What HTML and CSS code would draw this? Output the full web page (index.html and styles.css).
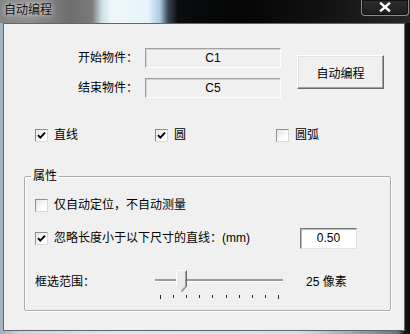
FILE: index.html
```html
<!DOCTYPE html>
<html lang="zh-CN">
<head>
<meta charset="utf-8">
<title>自动编程</title>
<link rel="stylesheet" href="styles.css">
</head>
<body>
<div class="window">
  <div class="titlebar">
    <div class="title">自动编程</div>
    <div class="close">
      <svg width="14" height="10" viewBox="0 0 14 10"><path d="M3 1.5 L11 8.5 M11 1.5 L3 8.5" stroke="#fff" stroke-width="2.4" stroke-linecap="square"/></svg>
    </div>
  </div>
  <div class="client">
    <div class="top">
      <div class="fields">
        <div class="label">开始物件：</div>
        <div class="field">C1</div>
        <div class="label">结束物件：</div>
        <div class="field">C5</div>
      </div>
      <button class="btn">自动编程</button>
    </div>

    <div class="types">
      <div class="check-item"><span class="box checked"><svg width="11" height="11" viewBox="0 0 11 11"><path d="M2 5.2 L4.3 7.6 L9 2.6" fill="none" stroke="#000" stroke-width="1.9"/></svg></span><span>直线</span></div>
      <div class="check-item"><span class="box checked"><svg width="11" height="11" viewBox="0 0 11 11"><path d="M2 5.2 L4.3 7.6 L9 2.6" fill="none" stroke="#000" stroke-width="1.9"/></svg></span><span>圆</span></div>
      <div class="check-item"><span class="box"></span><span>圆弧</span></div>
    </div>

    <fieldset class="group">
      <legend class="legend">属性</legend>
      <div class="row row1">
        <div class="check-item"><span class="box"></span><span>仅自动定位，不自动测量</span></div>
      </div>
      <div class="row row2">
        <div class="check-item"><span class="box checked"><svg width="11" height="11" viewBox="0 0 11 11"><path d="M2 5.2 L4.3 7.6 L9 2.6" fill="none" stroke="#000" stroke-width="1.9"/></svg></span><span>忽略长度小于以下尺寸的直线：(mm)</span></div>
        <div class="num">0.50</div>
      </div>
      <div class="row row3">
        <div class="range-label">框选范围：</div>
        <div class="slider">
          <div class="track"></div>
          <svg class="thumb" width="11" height="23" viewBox="0 0 11 23">
            <path d="M0.5 0.5 H10.5 V16.5 L5.5 22 L0.5 16.5 Z" fill="#ececec"/>
            <path d="M0.5 16.5 V0.5 H10" fill="none" stroke="#ffffff" stroke-width="1"/>
            <path d="M10.5 0.5 V16.5 L5.5 22" fill="none" stroke="#6a6a6a" stroke-width="1"/>
            <path d="M9.5 1.5 V16 L5.5 20.5" fill="none" stroke="#a0a0a0" stroke-width="1"/>
          </svg>
          <div class="ticks">
            <span class="tick long"></span><span class="tick"></span><span class="tick"></span><span class="tick"></span><span class="tick"></span><span class="tick"></span><span class="tick"></span><span class="tick"></span><span class="tick"></span><span class="tick long"></span>
          </div>
        </div>
        <div class="value">25 像素</div>
      </div>
    </fieldset>
  </div>
</div>
</body>
</html>
```

FILE: styles.css
```css
* { box-sizing: border-box; }
html, body {
  margin: 0;
  padding: 0;
  width: 410px;
  height: 334px;
  overflow: hidden;
}
body {
  font-family: "Liberation Sans", "Noto Sans CJK SC", sans-serif;
  font-size: 12px;
  color: #000;
}
.window {
  width: 410px;
  height: 334px;
  display: flex;
  flex-direction: column;
  background: linear-gradient(90deg, #9fb1bd 0, #c9d6de 20px, #dfe7ec 120px, #d7dfe4 300px, #6d7378 398px, #1a1a1a 404px, #0a0a0a 410px);
}
.titlebar {
  height: 23px;
  display: flex;
  justify-content: space-between;
  align-items: flex-start;
  background: linear-gradient(90deg, #858585 0, #8f8f8f 30px, #6e6e6e 70px, #7a7a7a 92px, #cfdfe8 102px, #eef7fb 112px, #e6f3fa 148px, #a9cbe3 160px, #3a4650 168px, #0a0c0e 178px, #050505 240px, #111 320px, #262626 410px);
}
.title {
  padding: 3px 0 0 4px;
  font-size: 12px;
  line-height: 14px;
  color: #111;
  text-shadow: 0 0 4px rgba(255,255,255,0.8), 0 0 8px rgba(255,255,255,0.5);
}
.close {
  width: 48px;
  height: 16px;
  margin-right: 1px;
  border: 1px solid #8c8c8c;
  border-top: none;
  border-radius: 0 0 4px 4px;
  background: linear-gradient(#2f2f2f, #1c1c1c);
  box-shadow: inset 0 0 0 1px #111;
  display: flex;
  align-items: center;
  justify-content: center;
}
.close svg { display: block; margin-top: -2px; }

.client {
  margin: 0 5px 0 3px;
  height: 308px;
  border: 1px solid #5f6569;
  background: #f0f0f0;
  display: flex;
  flex-direction: column;
}

.top {
  display: flex;
  align-items: flex-start;
  margin-top: 24px;
}
.fields {
  display: grid;
  grid-template-columns: 134px 136px;
  grid-auto-rows: 20px;
  column-gap: 7px;
  row-gap: 10px;
}
.label {
  text-align: right;
  line-height: 20px;
}
.field {
  text-align: center;
  line-height: 18px;
  font-size: 12px;
  border: 1px solid;
  border-color: #a0a0a0 #ffffff #ffffff #a0a0a0;
  box-shadow: inset 1px 1px 0 #d4d4d4;
  background: #f0f0f0;
}
.btn {
  margin: 7px 0 0 16px;
  width: 87px;
  height: 34px;
  font: inherit;
  font-size: 12px;
  color: #000;
  padding: 0;
  background: #f0f0f0;
  border: 1px solid;
  border-color: #ffffff #696969 #696969 #ffffff;
  box-shadow: inset -1px -1px 0 #a0a0a0, inset 1px 1px 0 #e3e3e3;
}

.types {
  display: grid;
  grid-template-columns: 120px 121px auto;
  padding-left: 31px;
  margin-top: 31px;
  height: 13px;
}
.check-item {
  display: flex;
  align-items: center;
  gap: 6px;
  line-height: 13px;
  height: 13px;
  white-space: nowrap;
}
.box {
  width: 13px;
  height: 13px;
  flex: none;
  border: 1px solid;
  border-color: #8e8f8f #d9d9d9 #d9d9d9 #8e8f8f;
  background: linear-gradient(135deg, #e4e4e4, #ffffff 70%);
  display: flex;
  align-items: center;
  justify-content: center;
}
.box svg { display: block; }

.group {
  margin: 26px 0 0 20px;
  width: 367px;
  min-width: 0;
  padding: 15px 33px 10px 10px;
  border: 1px solid #a9acae;
  border-radius: 2px;
  box-shadow: 1px 1px 0 #ffffff, inset 1px 1px 0 #ffffff;
}
.legend {
  padding: 0 2px;
  margin-left: -4px;
  line-height: 16px;
  font-size: 12px;
}
.row { display: flex; align-items: center; }
.row1 { height: 13px; }
.row2 { height: 21px; margin-top: 16px; justify-content: space-between; }
.num {
  width: 57px;
  height: 21px;
  background: #fff;
  border: 1px solid;
  border-color: #7a7a7a #e3e3e3 #e3e3e3 #7a7a7a;
  box-shadow: inset 1px 1px 0 #b9b9b9;
  text-align: center;
  line-height: 19px;
  font-size: 12px;
}
.row3 {
  margin-top: 21px;
  align-items: flex-start;
  height: 30px;
}
.range-label {
  width: 120px;
  line-height: 16px;
  margin-top: 4px;
}
.slider {
  position: relative;
  width: 128px;
  height: 30px;
}
.track {
  margin-top: 9px;
  height: 3px;
  border-top: 2px solid #9a9a9a;
  border-bottom: 1px solid #ffffff;
}
.thumb {
  position: absolute;
  left: 21px;
  top: 0;
  display: block;
}
.ticks {
  margin: 13px 0 0 5px;
  width: 119px;
  display: flex;
  justify-content: space-between;
  align-items: flex-start;
}
.tick {
  width: 1px;
  height: 3px;
  background: #2a2a2a;
}
.tick.long { height: 4px; }
.value {
  margin-left: 23px;
  margin-top: 4px;
  line-height: 16px;
  white-space: nowrap;
}
```
